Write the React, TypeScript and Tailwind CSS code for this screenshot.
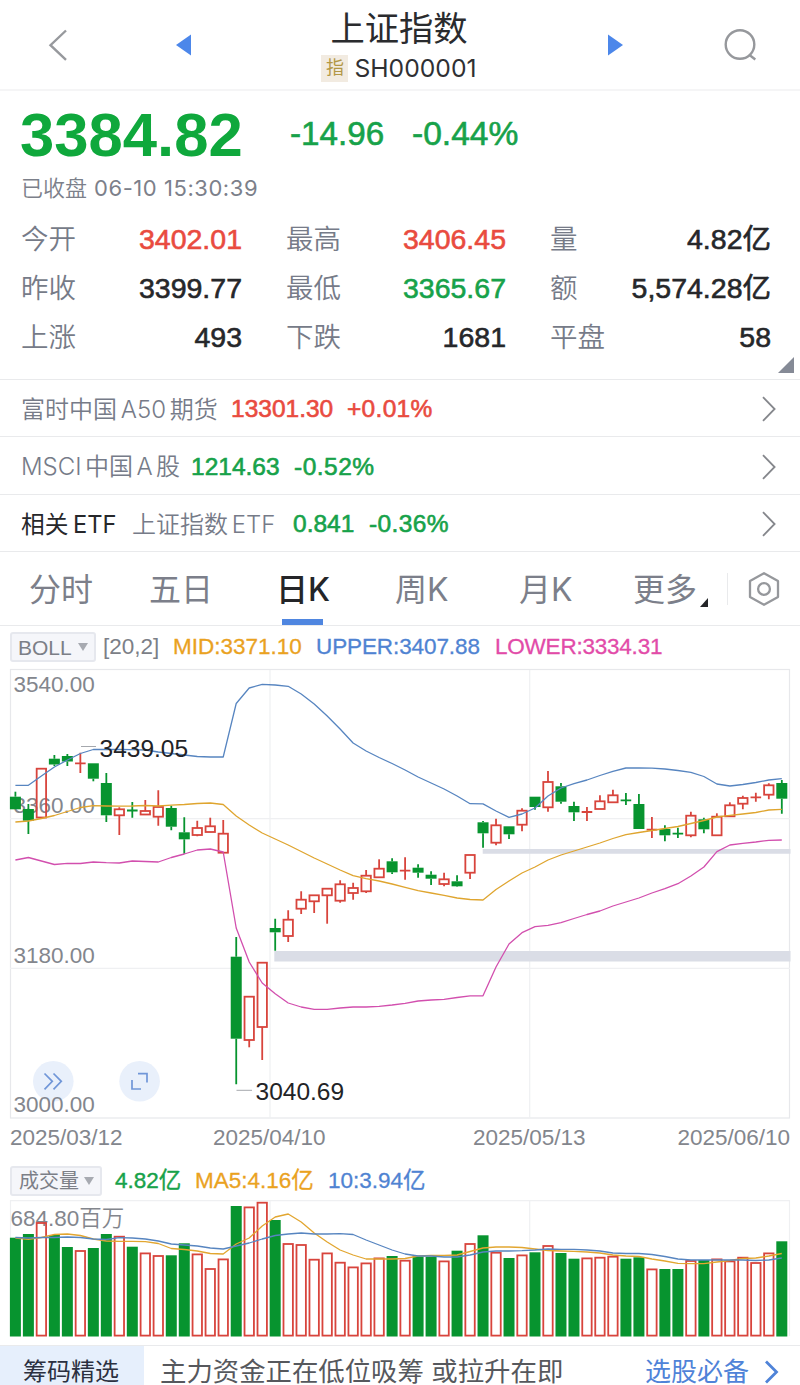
import React from "react";

const RED = "#d8443c";
const GREEN = "#07942f";

type Candle = [up: 0 | 1, top: number, bottom: number, high: number, low: number];

const candles: Candle[] = [
  [0, 796.7, 809.3, 791.7, 809.3], [0, 809, 820.7, 804, 834], [1, 768.7, 817.5, 768.7, 817.5],
  [0, 758.7, 764.5, 755, 766], [0, 756, 761.5, 754, 766], [1, 763.3, 763.3, 752.7, 773],
  [0, 763.3, 778.7, 763.3, 781.3], [0, 783, 815.3, 773, 822], [1, 809.3, 815.3, 807.3, 835],
  [0, 810.5, 810.5, 802, 817.7], [1, 811, 814.5, 800, 814.5], [1, 807, 816.7, 790.3, 825.7],
  [0, 808, 826.7, 805.7, 830.3], [0, 832.3, 839.3, 817.3, 853.7], [1, 828, 835, 820.7, 836.3],
  [1, 826.3, 832, 817.7, 832], [1, 833.7, 852.7, 820, 852.7], [0, 956.7, 1038.7, 937, 1084.3],
  [1, 996.7, 1040, 996.7, 1047.3], [1, 962.7, 1027, 962.7, 1060], [0, 928, 932.3, 918.7, 950.7],
  [1, 919.7, 936, 910.3, 942], [1, 899.7, 908.7, 891.3, 914], [1, 895.3, 901.3, 895.3, 913],
  [1, 888.7, 895.3, 888.7, 923.7], [1, 884.3, 900.7, 880.3, 902.7], [1, 888, 893, 882.7, 899.7],
  [1, 875.7, 891.3, 870, 893], [1, 868.7, 877.3, 859.3, 877.3], [0, 861.3, 872.3, 858.3, 874],
  [1, 870.7, 870.7, 857.3, 879.7], [0, 867.7, 872.7, 864.3, 877.7], [0, 874.7, 878.7, 871.3, 885],
  [1, 879.3, 884, 872.7, 886.3], [0, 881.3, 886.3, 875.3, 886.7], [1, 855, 872.7, 855, 879],
  [0, 822.3, 833.3, 821, 847.7], [1, 825.3, 842.7, 818.7, 845.3], [0, 826.3, 834.3, 826.3, 839],
  [1, 810.7, 824.7, 808.3, 831.3], [0, 796.7, 807, 796.7, 809.7], [1, 782, 807.3, 771, 811.7],
  [0, 786.3, 801.7, 783, 803.7], [0, 806, 812.3, 801.7, 821], [1, 812, 812, 807, 821],
  [1, 801.3, 809, 795.3, 809], [1, 795.3, 802.3, 789.7, 802.3], [0, 800.3, 800.3, 793, 805],
  [0, 804, 829, 794, 829], [1, 829.7, 829.7, 817, 838], [0, 829, 835.3, 825.3, 841.3],
  [0, 833.7, 833.7, 827.7, 838], [1, 815.7, 835.3, 811.7, 837.3], [0, 819.3, 829.3, 817.7, 833.3],
  [1, 816.7, 835.3, 813.3, 835.3], [1, 805.3, 816.3, 802.3, 816.3], [1, 798, 803.7, 795.7, 809.3],
  [1, 797.3, 797.3, 792.7, 801.7], [1, 785.3, 794.7, 783.3, 799.3], [0, 783, 798.7, 780, 813.7],
];

const volumeTops = [
  1237.7, 1234, 1222.3, 1235, 1247, 1250.3, 1248, 1234, 1236, 1246.7, 1252.7, 1255.3, 1255.3, 1243.3, 1253.7,
  1268.3, 1258.7, 1206, 1206.7, 1202, 1220, 1243.3, 1244.3, 1259, 1252.7, 1262, 1266.7, 1262.7, 1257.7, 1256,
  1260, 1256.3, 1256.7, 1260.7, 1250.7, 1243.3, 1235.3, 1252, 1258, 1254.7, 1252.3, 1245.3, 1253, 1258.7, 1257.7,
  1257, 1256, 1258.7, 1257.3, 1268.7, 1269, 1269, 1260.3, 1260, 1258.7, 1260.7, 1257, 1262.3, 1252.7, 1241.3,
];

const upper = [
  785.3, 785.3, 776, 767, 760, 753.5, 749.5, 749.5, 749.3, 749.7, 750, 752, 753.5, 755, 756.5, 757, 757, 703.5, 688,
  684.3, 685, 686.3, 694, 704, 716, 729, 743, 751, 757.5, 763.5, 770, 777, 783, 789, 796, 803.7, 803.9, 811, 817.3, 814,
  808, 796, 788, 783.7, 780, 775.5, 771.3, 768, 767.8, 768.2, 769, 770.5, 772.3, 776.5, 784, 786, 784.5, 782.5, 780, 778.7,
];
const mid = [
  822, 821, 818.5, 815.5, 811.5, 807.5, 805.7, 806, 806.2, 806, 805.5, 806, 805.2, 804.5, 803.5, 803, 804.5, 816, 825, 833,
  839, 845, 851.5, 858, 864, 870, 875.7, 878.7, 881, 884, 887.3, 890.7, 893, 895.3, 898, 899.5, 900, 889.5, 881, 873, 867,
  860, 855, 851, 847, 843, 838.5, 834.7, 832.5, 830.5, 828.5, 826.5, 823.5, 820.5, 817, 815.3, 814, 812.5, 810, 809.3,
];
const lower = [
  860, 857.5, 861, 864.5, 863.3, 863.5, 862, 862.7, 863, 861, 861.5, 862, 857.5, 854, 850, 849, 852, 928, 962, 983, 993.7,
  1003, 1007, 1009.3, 1009.3, 1008, 1007, 1007, 1006.3, 1005, 1003.3, 1001, 1000, 999.3, 997.5, 995.8, 995.8, 967, 944,
  932.7, 926.7, 925.3, 922.7, 918.5, 914.5, 911, 906, 902, 898, 893, 888.7, 883.7, 876, 867, 851.7, 845, 843.3, 842, 840.3, 840,
];
const volMa5 = [
  1238, 1239.3, 1237.5, 1234.5, 1234, 1235.5, 1239, 1241, 1241.3, 1241.3, 1241.7, 1243.5, 1248.5, 1249.5, 1251, 1253.5,
  1254, 1244, 1238, 1226, 1217, 1214, 1222, 1233, 1242, 1250, 1255, 1259, 1259, 1259, 1258.5, 1256, 1255.5, 1255.5, 1255,
  1251.5, 1248, 1247, 1247, 1247.5, 1249, 1250.5, 1251, 1251.3, 1252, 1253, 1255, 1256, 1256.5, 1259, 1261, 1263.3,
  1263.7, 1263.7, 1262, 1260.5, 1258.5, 1258, 1256, 1253.5,
];
const volMa10 = [
  1237.5, 1238, 1237.5, 1237.5, 1237, 1237.5, 1239, 1239.5, 1237.7, 1238, 1239, 1241, 1244, 1245, 1246, 1248, 1249, 1246,
  1243, 1239, 1235.5, 1234, 1233, 1234, 1234, 1233.7, 1234.5, 1240, 1245, 1250, 1254, 1256, 1256, 1257, 1257, 1255, 1252,
  1251, 1251, 1250.7, 1250, 1249, 1249.3, 1249.3, 1250, 1251, 1253, 1253.5, 1253.5, 1254.5, 1256.5, 1259, 1260, 1260,
  1260, 1260, 1260, 1260.5, 1260, 1258,
];

const xAt = (i: number) => 15.4 + 12.99 * i;
const line = (ys: number[]) => ys.map((y, i) => `${xAt(i).toFixed(1)},${y}`).join(" ");

const num = "font-['Liberation_Sans','Noto_Sans_CJK_SC',sans-serif]";
const medium = "font-['Liberation_Sans','Noto_Sans_CJK_SC',sans-serif] [-webkit-text-stroke:0.6px_currentColor]";

function Stat({ label, value, tone }: { label: string; value: string; tone: string }) {
  return (
    <div className="flex items-center justify-between">
      <span className="text-[27.5px] font-[350] text-[#767b88]">{label}</span>
      <span className={`text-[28.5px] ${medium} ${tone}`}>{value}</span>
    </div>
  );
}

function RelatedRow({ children, height }: { children: React.ReactNode; height: string }) {
  return (
    <div className={`flex items-center border-b border-[#e9eaec] pt-[2px] pl-[21px] pr-6 whitespace-nowrap ${height}`}>
      {children}
      <svg className="ml-auto" width="14" height="26" viewBox="0 0 14 26" fill="none" stroke="#85878c" strokeWidth="1.8">
        <path d="M1 1.2 12.6 13 1 24.8" />
      </svg>
    </div>
  );
}

function PriceChart() {
  return (
    <svg className="block shrink-0" width="800" height="458" viewBox="0 667 800 458" fill="none">
      <g stroke="#e7e8eb" strokeWidth="1.2">
        <rect x="10.5" y="669.5" width="779" height="448.5" />
        <path d="M10 818.7H790M10 968.3H790M270 670V1118M529.7 670V1118" stroke="#eff0f2" />
      </g>
      <path d="M274.3 951H790.5V961.5H274.3zM482.7 849H790.5V853.7H482.7z" fill="#dadde6" />
      <g fontSize="22.5" fill="#83868d" className={num}>
        <text x="13.5" y="692">3540.00</text>
        <text x="13.5" y="813">3360.00</text>
        <text x="13.5" y="962.5">3180.00</text>
      </g>
      {candles.map(([up, top, bottom, high, low], i) => {
        const x = xAt(i);
        const color = up ? RED : GREEN;
        if (top === bottom) {
          return <path key={i} d={`M${x - 5.3} ${top}H${x + 5.3}M${x} ${high}V${low}`} stroke={color} strokeWidth="1.8" />;
        }
        return (
          <g key={i} stroke={color} strokeWidth="1.8">
            <path d={`M${x} ${high}V${top}M${x} ${bottom}V${low}`} />
            {up ? (
              <rect x={x - 4.7} y={top} width="9.4" height={bottom - top} />
            ) : (
              <rect x={x - 5.5} y={top} width="11" height={bottom - top} fill={GREEN} stroke="none" />
            )}
          </g>
        );
      })}
      <g strokeWidth="1.3" strokeLinejoin="round">
        <polyline points={line(upper)} stroke="#5785c0" />
        <polyline points={line(mid)} stroke="#dfa52f" />
        <polyline points={line(lower)} stroke="#d24fae" />
      </g>
      <path d="M81 746.5H96M236.5 1090.3H252" stroke="#a5a8ad" />
      <g fontSize="24.5" fill="#222326" className={num}>
        <text x="99.5" y="756.5">3439.05</text>
        <text x="255.5" y="1100">3040.69</text>
      </g>
      <circle cx="53.3" cy="1081.3" r="20.3" fill="#e9f0fb" />
      <circle cx="139.6" cy="1081.3" r="20.3" fill="#e9f0fb" />
      <path d="M44.5 1073.5 52.3 1081.3 44.5 1089.3M53.5 1073.5 61.3 1081.3 53.5 1089.3" stroke="#7096d8" strokeWidth="1.7" />
      <path d="M138 1073.7H147V1082.5M132 1080V1089H141" stroke="#7096d8" strokeWidth="1.7" />
      <text x="13.5" y="1112.3" fontSize="22.5" fill="#83868d" className={num}>3000.00</text>
    </svg>
  );
}

function VolumeChart() {
  return (
    <svg className="block shrink-0" width="800" height="145" viewBox="0 1200 800 145" fill="none">
      <path d="M10.5 1336V1200.7H789.5V1336M270 1200.7V1336M529.7 1200.7V1336" stroke="#eff0f2" strokeWidth="1.2" />
      <text x="10.5" y="1225.5" fontSize="22.5" fill="#83868d" className={`font-[350] ${num}`}>684.80百万</text>
      {volumeTops.map((top, i) => {
        const x = xAt(i);
        return candles[i][0] ? (
          <rect key={i} x={x - 4.7} y={top + 0.7} width="9.4" height={1334.9 - top} stroke={RED} strokeWidth="1.8" />
        ) : (
          <rect key={i} x={x - 5.5} y={top} width="11" height={1336.5 - top} fill={GREEN} />
        );
      })}
      <g strokeWidth="1.3" strokeLinejoin="round">
        <polyline points={line(volMa5)} stroke="#e2a630" />
        <polyline points={line(volMa10)} stroke="#5785c0" />
      </g>
    </svg>
  );
}

const red = "text-[#e94b3f]";
const green = "text-[#17a24a]";
const dark = "text-[#26272a]";

export default function App() {
  return (
    <div className="flex h-[1385px] w-[800px] flex-col bg-white font-['Inter','Noto_Sans_CJK_SC',sans-serif] leading-none">
      <header className="flex h-[91px] shrink-0 items-center border-b-2 border-[#f5f5f6]">
        <svg className="ml-12 shrink-0" width="20" height="32" viewBox="0 0 20 32" fill="none" stroke="#97999d" strokeWidth="2.4">
          <path d="M18 1.5 2.5 16.2 18 30.8" />
        </svg>
        <svg className="ml-[108px] shrink-0" width="15" height="22" viewBox="0 0 15 22" fill="#4c87ea">
          <path d="M15 .5V21.5L0 11z" />
        </svg>
        <div className="ml-[108px] flex w-[200px] flex-col items-center pt-[4px]">
          <div className="text-[34.3px] leading-[42px] text-[#2a2b2e]">上证指数</div>
          <div className="mt-[1px] flex h-[34px] items-center gap-[6px]">
            <span className="flex h-[27px] w-[27px] items-center justify-center bg-[#f2ebe1] text-[18px] text-[#b29745]">指</span>
            <span className="text-[24.7px] text-[#2f3033]">SH000001</span>
          </div>
        </div>
        <svg className="ml-[109px] shrink-0" width="15" height="22" viewBox="0 0 15 22" fill="#4c87ea">
          <path d="M0 .5V21.5L15 11z" />
        </svg>
        <svg className="ml-[101px] shrink-0" width="34" height="34" viewBox="0 0 34 34" fill="none" stroke="#96989c" strokeWidth="2.4">
          <circle cx="16" cy="16.5" r="14.3" />
          <path d="M25.5 27 31.3 31.5" />
        </svg>
      </header>

      <section className="flex h-[289px] shrink-0 flex-col border-b border-[#e9eaec] whitespace-nowrap">
        <div className="flex h-[84px] items-center pt-[1px] pl-5">
          <span className={`w-[270px] pt-[2px] text-[61.6px] font-bold text-[#0fa83c] ${num}`}>3384.82</span>
          <span className={`w-[122px] text-[33.2px] ${green} ${medium}`}>-14.96</span>
          <span className={`text-[33.6px] ${green} ${medium}`}>-0.44%</span>
        </div>
        <div className="flex h-[27px] items-center pb-[2px] pl-[21px] text-[22px] font-[350] text-[#7c808a]">
          已收盘<span className="ml-[7px] font-normal tracking-[0.55px]">06-10 15:30:39</span>
        </div>
        <div className="mt-[13px] grid grid-cols-[221px_220px_221px] gap-x-11 pl-[21px] [grid-auto-rows:49px]">
          <Stat label="今开" value="3402.01" tone={red} />
          <Stat label="最高" value="3406.45" tone={red} />
          <Stat label="量" value="4.82亿" tone={dark} />
          <Stat label="昨收" value="3399.77" tone={dark} />
          <Stat label="最低" value="3365.67" tone={green} />
          <Stat label="额" value="5,574.28亿" tone={dark} />
          <Stat label="上涨" value="493" tone={dark} />
          <Stat label="下跌" value="1681" tone={dark} />
          <Stat label="平盘" value="58" tone={dark} />
        </div>
        <svg className="mr-[6px] mt-[-5px] shrink-0 self-end" width="16" height="16" fill="#858a96">
          <path d="M16 0V16H0z" />
        </svg>
      </section>

      <section className="shrink-0">
        <RelatedRow height="h-[57px]">
          <span className="w-[210px] pt-px text-[24px] font-[350] text-[#767b88] [word-spacing:-3px]">富时中国 A50 期货</span>
          <span className={`w-[116px] pt-px text-[24.5px] ${red} ${medium}`}>13301.30</span>
          <span className={`pt-px text-[24.5px] tracking-[0.3px] ${red} ${medium}`}>+0.01%</span>
        </RelatedRow>
        <RelatedRow height="h-[58px]">
          <span className="w-[170px] text-[24px] font-[350] text-[#767b88] [word-spacing:-3.3px]">MSCI 中国 A 股</span>
          <span className={`w-[103px] pt-px text-[24.5px] ${green} ${medium}`}>1214.63</span>
          <span className={`pt-px text-[24.5px] tracking-[0.5px] ${green} ${medium}`}>-0.52%</span>
        </RelatedRow>
        <RelatedRow height="h-[57px]">
          <span className={`w-[111px] pt-px text-[23.7px] [word-spacing:-2px] ${dark}`}>相关 ETF</span>
          <span className="w-[161px] pt-px text-[24px] font-[350] text-[#767b88] [word-spacing:-3px]">上证指数 ETF</span>
          <span className={`w-[76px] pt-px text-[24.5px] ${green} ${medium}`}>0.841</span>
          <span className={`pt-px text-[24.5px] tracking-[0.4px] ${green} ${medium}`}>-0.36%</span>
        </RelatedRow>
      </section>

      <nav className="flex h-[74px] shrink-0 items-stretch border-b border-[#e9eaec] pl-[29px] text-[32px] text-[#7c7f8a]">
        <div className="flex w-[120px] items-center pt-[3px]">分时</div>
        <div className="flex w-[127px] items-center pt-[3px]">五日</div>
        <div className="relative flex w-[119px] items-center pt-[3px] font-medium text-[#242528]">
          日K
          <span className="absolute bottom-0 left-[6px] h-[6px] w-[41px] bg-[#4f86e0]" />
        </div>
        <div className="flex w-[124px] items-center pt-[3px]">周K</div>
        <div className="flex w-[114px] items-center pt-[3px]">月K</div>
        <div className="flex w-[94px] items-center pt-[3px]">
          更多
          <svg className="mt-[24px] ml-[3px]" width="8" height="9" fill="#242528"><path d="M8 0V9H0z" /></svg>
        </div>
        <div className="flex items-center">
          <span className="h-8 w-px bg-[#e9eaec]" />
          <svg className="ml-5" width="32" height="36" viewBox="0 0 32 36" fill="none" stroke="#96989c" strokeWidth="2.3">
            <path d="M16 2.2 30 10V26L16 33.8 2 26V10z" strokeLinejoin="round" />
            <circle cx="16" cy="18" r="5.9" />
          </svg>
        </div>
      </nav>

      <div className={`flex h-[41px] shrink-0 items-center pt-[1px] pl-[10px] text-[22.5px] whitespace-nowrap ${num}`}>
        <span className="flex h-[30px] w-[86px] items-center rounded-[3px] border-2 border-[#e6e8ee] bg-[#f5f6fa] pl-[6px] text-[21px] text-[#7c7f87]">
          BOLL
          <svg className="ml-[6px]" width="10" height="8" fill="#a7aab1"><path d="M0 0H10L5 8z" /></svg>
        </span>
        <span className="ml-[7px] w-[70px] pt-px text-[#7c7f87]">[20,2]</span>
        <span className="w-[143px] pt-px text-[#eaa21f] [-webkit-text-stroke:0.3px_currentColor]">MID:3371.10</span>
        <span className="w-[179px] pt-px tracking-[-0.1px] text-[#4f83d2] [-webkit-text-stroke:0.3px_currentColor]">UPPER:3407.88</span>
        <span className="pt-px tracking-[-0.22px] text-[#e24ba8] [-webkit-text-stroke:0.3px_currentColor]">LOWER:3334.31</span>
      </div>

      <PriceChart />

      <div className={`flex h-[27px] shrink-0 items-center justify-between pr-[10px] pl-[10px] text-[22.5px] text-[#83868d] ${num}`}>
        <span className="w-[203px]">2025/03/12</span>
        <span className="w-[260px]">2025/04/10</span>
        <span className="flex-1">2025/05/13</span>
        <span>2025/06/10</span>
      </div>
      <div className={`flex h-[48px] shrink-0 items-center pt-[9px] pl-[10px] text-[22.5px] whitespace-nowrap ${num}`}>
        <span className="flex h-[30px] w-[92px] items-center rounded-[3px] border-2 border-[#e6e8ee] bg-[#f5f6fa] pl-[7px] text-[20px] text-[#7c7f87]">
          成交量
          <svg className="ml-[5px]" width="10" height="8" fill="#a7aab1"><path d="M0 0H10L5 8z" /></svg>
        </span>
        <span className={`ml-[13px] w-[80px] pt-px ${green} [-webkit-text-stroke:0.4px_currentColor]`}>4.82亿</span>
        <span className="w-[133px] pt-px text-[#eaa21f] [-webkit-text-stroke:0.3px_currentColor]">MA5:4.16亿</span>
        <span className="pt-px text-[#4f83d2] [-webkit-text-stroke:0.3px_currentColor]">10:3.94亿</span>
      </div>

      <VolumeChart />

      <footer className="flex h-[40px] shrink-0 items-stretch border-t border-[#e9eaec] whitespace-nowrap">
        <div className="flex w-[144px] items-center justify-center bg-[#e6effc] pt-[12px] pr-[2px] text-[24px] text-[#2b3040]">筹码精选</div>
        <div className="flex w-[501px] items-center pt-[12px] pl-[16px] text-[26.4px] text-[#56585d]">主力资金正在低位吸筹 或拉升在即</div>
        <div className="flex items-center pt-[12px] text-[26px] text-[#4f83d8]">
          选股必备
          <svg className="ml-[15px]" width="15" height="24" viewBox="0 0 15 24" fill="none" stroke="#4f83d8" strokeWidth="2.8">
            <path d="M2 1.5 12.5 12 2 22.5" />
          </svg>
        </div>
      </footer>
    </div>
  );
}
